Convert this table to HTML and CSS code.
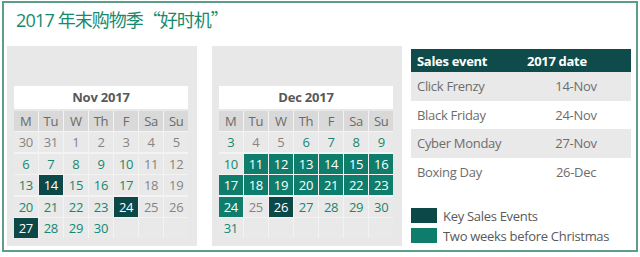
FILE: index.html
```html
<!DOCTYPE html>
<html lang="zh-CN">
<head>
<meta charset="utf-8">
<title>2017 年末购物季</title>
<link rel="stylesheet" href="styles.css">
</head>
<body>
<div class="frame">
  <h1 class="title">2017 <span class="cjk">年末购物季“好时机”</span></h1>
  <div class="main">
    <section class="panel">
      <div class="month">Nov 2017</div>
      <div class="grid">
        <div class="dow">M</div><div class="dow">Tu</div><div class="dow">W</div><div class="dow">Th</div><div class="dow">F</div><div class="dow">Sa</div><div class="dow">Su</div>
        <div class="d g">30</div><div class="d g">31</div><div class="d g">1</div><div class="d g">2</div><div class="d g">3</div><div class="d g">4</div><div class="d g">5</div>
        <div class="d t">6</div><div class="d t">7</div><div class="d t">8</div><div class="d t">9</div><div class="d t">10</div><div class="d g">11</div><div class="d g">12</div>
        <div class="d t">13</div><div class="d k">14</div><div class="d t">15</div><div class="d t">16</div><div class="d t">17</div><div class="d g">18</div><div class="d g">19</div>
        <div class="d t">20</div><div class="d t">21</div><div class="d t">22</div><div class="d t">23</div><div class="d k">24</div><div class="d g">25</div><div class="d g">26</div>
        <div class="d k">27</div><div class="d t">28</div><div class="d t">29</div><div class="d t">30</div><div class="d"></div><div class="d"></div><div class="d"></div>
      </div>
    </section>
    <section class="panel">
      <div class="month">Dec 2017</div>
      <div class="grid">
        <div class="dow">M</div><div class="dow">Tu</div><div class="dow">W</div><div class="dow">Th</div><div class="dow">F</div><div class="dow">Sa</div><div class="dow">Su</div>
        <div class="d t">3</div><div class="d g">4</div><div class="d g">5</div><div class="d t">6</div><div class="d t">7</div><div class="d t">8</div><div class="d t">9</div>
        <div class="d t">10</div><div class="d x">11</div><div class="d x">12</div><div class="d x">13</div><div class="d x">14</div><div class="d x">15</div><div class="d x">16</div>
        <div class="d x">17</div><div class="d x">18</div><div class="d x">19</div><div class="d x">20</div><div class="d x">21</div><div class="d x">22</div><div class="d x">23</div>
        <div class="d x">24</div><div class="d g">25</div><div class="d k">26</div><div class="d t">27</div><div class="d t">28</div><div class="d t">29</div><div class="d t">30</div>
        <div class="d t">31</div><div class="d"></div><div class="d"></div><div class="d"></div><div class="d"></div><div class="d"></div><div class="d"></div>
      </div>
    </section>
    <aside class="side">
      <table class="events">
        <thead>
          <tr><th class="c1">Sales event</th><th class="c2">2017 date</th></tr>
        </thead>
        <tbody>
          <tr><td class="c1">Click Frenzy</td><td class="c2">14-Nov</td></tr>
          <tr><td class="c1">Black Friday</td><td class="c2">24-Nov</td></tr>
          <tr><td class="c1">Cyber Monday</td><td class="c2">27-Nov</td></tr>
          <tr><td class="c1">Boxing Day</td><td class="c2">26-Dec</td></tr>
        </tbody>
      </table>
      <ul class="legend">
        <li class="item"><span class="sw sw-key"></span>Key Sales Events</li>
        <li class="item"><span class="sw sw-xmas"></span>Two weeks before Christmas</li>
      </ul>
    </aside>
  </div>
</div>
</body>
</html>
```
FILE: styles.css
```css
* { box-sizing: border-box; }
html, body { margin: 0; padding: 0; background: #ffffff; }
body {
  font-family: "Open Sans", "Noto Sans", "Noto Sans CJK SC", sans-serif;
  color: #595959;
}
.frame {
  margin: 1px 0 0 2px;
  width: 636px;
  height: 251px;
  border: 2px solid #5f9d8a;
  background: #ffffff;
}
.title {
  margin: 0;
  padding: 4px 0 0 12px;
  height: 28px;
  font-family: "Open Sans", "Noto Sans CJK SC", sans-serif;
  font-weight: 400;
  font-size: 18px;
  line-height: 24px;
  letter-spacing: -0.8px;
  color: #168a70;
  white-space: nowrap;
}
.cjk {
  font-family: "Noto Sans CJK SC", sans-serif;
  letter-spacing: -1px;
}
.main {
  display: flex;
  align-items: flex-start;
  padding-left: 3px;
  margin-top: 15px;
}
.panel {
  width: 190px;
  height: 200px;
  background: #e8e8e8;
  padding: 40px 9px 0 7px;
}
.panel + .panel { margin-left: 15px; }
.month {
  height: 23px;
  margin-bottom: 1.5px;
  background: #ffffff;
  text-align: center;
  font-weight: 700;
  font-size: 13px;
  line-height: 23px;
  letter-spacing: -0.2px;
  color: #595959;
}
.grid {
  display: grid;
  grid-template-columns: repeat(7, 1fr);
  grid-auto-rows: 20px;
  gap: 1.5px;
  background: #f3f3f3;
}
.dow, .d {
  display: flex;
  align-items: center;
  justify-content: center;
  font-size: 13px;
  letter-spacing: -0.3px;
}
.dow { background: #d9d9d9; color: #6a6a6a; }
.d { background: #e9e9e9; }
.d.g { color: #858585; }
.d.t { color: #16876f; }
.d.k { background: #0c4848; color: #ffffff; }
.d.x { background: #0e7d6c; color: #ffffff; }
.side {
  margin-left: 9px;
  width: 220px;
  padding-top: 3px;
}
.events {
  width: 220px;
  border-collapse: collapse;
  table-layout: fixed;
  font-size: 13px;
  letter-spacing: -0.3px;
}
.events th {
  height: 23px;
  background: #0f4b4b;
  color: #ffffff;
  font-weight: 700;
  text-align: left;
  padding: 0 0 0 6px;
}
.events td {
  height: 28.5px;
  padding: 0 0 0 6px;
  color: #6d6d6d;
}
.events tbody tr:nth-child(odd) td { background: #e9e9e9; }
.events tbody tr:nth-child(even) td { background: #ffffff; }
.events .c1 { width: 110px; }
.events td.c2 { text-align: center; padding: 0; }
.legend {
  list-style: none;
  margin: 19.5px 0 0 0;
  padding: 0;
}
.item {
  display: flex;
  align-items: center;
  height: 20px;
  font-size: 13px;
  letter-spacing: -0.3px;
  color: #595959;
}
.sw {
  display: block;
  width: 26px;
  height: 15px;
  margin-right: 6px;
}
.sw-key { background: #0c4848; }
.sw-xmas { background: #0e7d6c; }
```
